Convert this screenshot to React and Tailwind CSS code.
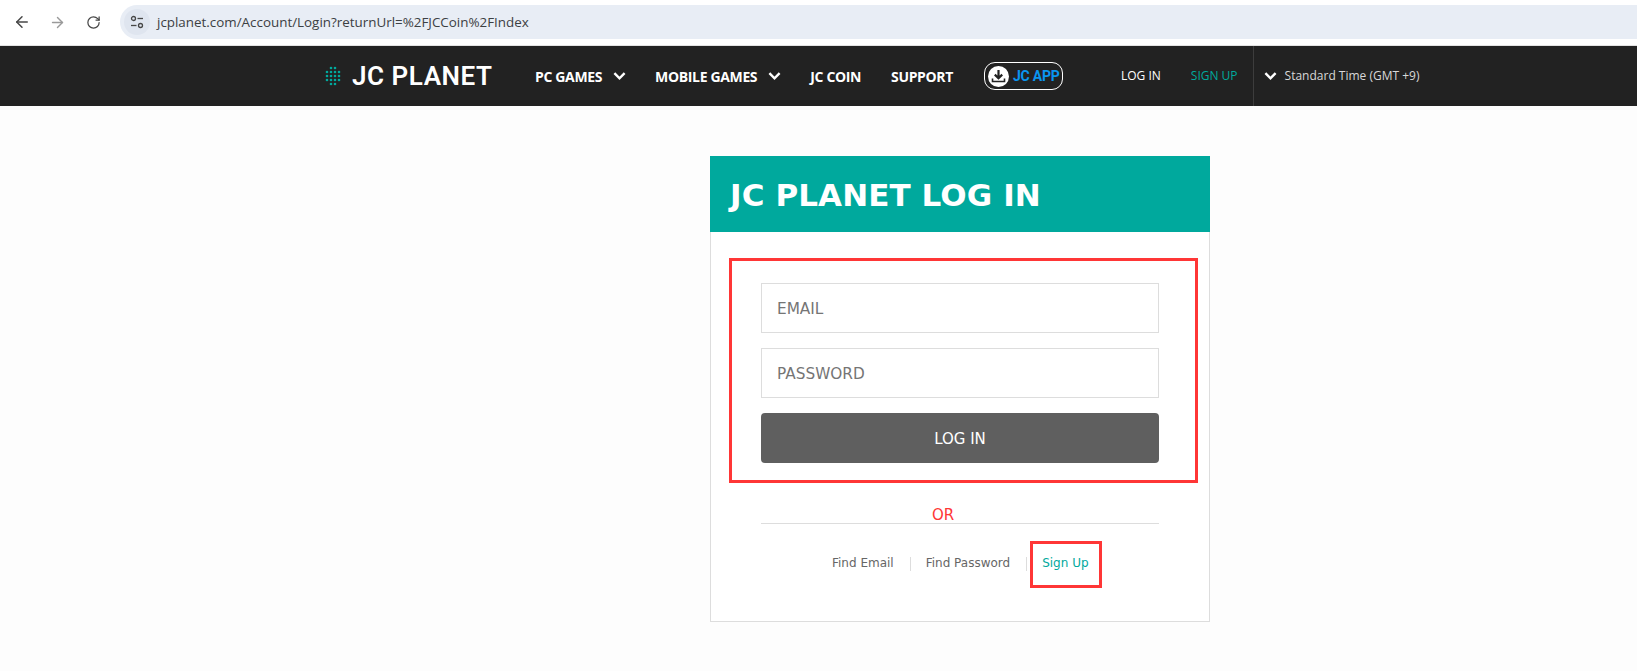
import React from 'react';
import { ArrowLeft, ArrowRight, RotateCw } from 'lucide-react';

const Chevron = ({ className }) => (
  <svg viewBox="0 0 14 10" className={className} fill="none" stroke="currentColor" strokeWidth="2.6">
    <path d="M1.5 2 L7 7.5 L12.5 2" />
  </svg>
);

const LogoDots = () => {
  const rows = [
    [7, 11],
    [3, 7, 11, 15],
    [3, 7, 11, 15],
    [3, 7, 11, 15],
    [7, 11],
  ];
  return (
    <svg width="18" height="20" viewBox="0 0 18 20" className="shrink-0">
      {rows.map((row, y) =>
        row.map((x) => <circle key={`${x}-${y}`} cx={x} cy={y * 4 + 2} r="1.3" fill="#00a99d" />)
      )}
    </svg>
  );
};

const BrowserBar = () => (
  <div className="h-[46px] pb-[1px] bg-white flex items-center border-b border-[#e3e3e3]">
    <ArrowLeft className="w-[18px] h-[18px] ml-[13px] text-[#474747]" strokeWidth={2} />
    <ArrowRight className="w-[17px] h-[17px] ml-[18px] text-[#9a9a9a]" strokeWidth={2} />
    <RotateCw className="w-[15px] h-[15px] ml-[20px] text-[#474747]" strokeWidth={2} />
    <div className="ml-[19px] flex-1 h-[34px] rounded-l-full bg-[#e8edf5] flex items-center">
      <div className="ml-[4px] w-[26px] h-[26px] rounded-full bg-[#dfe5ef] flex items-center justify-center">
        <svg width="14" height="14" viewBox="0 0 14 14" fill="none" stroke="#474747" strokeWidth="1.3">
          <circle cx="3.5" cy="3.5" r="2" />
          <path d="M7.5 3.5 H13" />
          <path d="M1 10.5 H6.5" />
          <circle cx="10.5" cy="10.5" r="2" />
        </svg>
      </div>
      <span className="ml-[7px] text-[13.4px] text-[#3c4043] font-['Open_Sans',sans-serif]">
        jcplanet.com/Account/Login?returnUrl=%2FJCCoin%2FIndex
      </span>
    </div>
  </div>
);

const NavBar = () => (
  <div className="h-[60px] bg-[#222222] flex items-center text-white font-['Open_Sans',sans-serif]">
    <div className="ml-[324px]">
      <LogoDots />
    </div>
    <span className="ml-[10px] w-[141px] text-[26px] font-semibold tracking-[0.55px] whitespace-nowrap font-['Roboto',sans-serif]">
      JC PLANET
    </span>
    <span className="ml-[42px] text-[14px] font-bold tracking-[-0.35px]">PC GAMES</span>
    <Chevron className="ml-[11px] w-[13px] h-[10px]" />
    <span className="ml-[29px] text-[14px] font-bold tracking-[-0.35px]">MOBILE GAMES</span>
    <Chevron className="ml-[11px] w-[13px] h-[10px]" />
    <span className="ml-[29px] text-[14px] font-bold tracking-[-0.35px]">JC COIN</span>
    <span className="ml-[30px] text-[14px] font-bold tracking-[-0.35px]">SUPPORT</span>
    <div className="ml-[31px] w-[79px] h-[28px] rounded-[11px] border border-white flex items-center">
      <svg width="21" height="21" viewBox="0 0 21 21" className="ml-[3px] shrink-0">
        <circle cx="10.5" cy="10.5" r="10.5" fill="#ffffff" />
        <path d="M10.5 4 V12 M6.8 8.6 L10.5 12.3 L14.2 8.6" fill="none" stroke="#222222" strokeWidth="2.2" />
        <path d="M4.5 12.5 V15.5 H16.5 V12.5" fill="none" stroke="#222222" strokeWidth="1.6" />
      </svg>
      <span className="ml-[4px] text-[14px] font-bold text-[#0a95f0] tracking-[-0.2px] whitespace-nowrap font-['Roboto',sans-serif]">
        JC APP
      </span>
    </div>
    <span className="ml-[58px] text-[12px]">LOG IN</span>
    <span className="ml-[30px] text-[12px] text-[#00a99d]">SIGN UP</span>
    <div className="ml-[15px] h-full border-l border-[#3d3d3d] flex items-center">
      <Chevron className="ml-[10px] w-[13px] h-[10px]" />
      <span className="ml-[8px] text-[12px] text-[#d8d8d8]">Standard Time (GMT +9)</span>
    </div>
  </div>
);

const LoginCard = () => (
  <div className="ml-[710px] mt-[50px] w-[500px] font-['DejaVu_Sans',sans-serif]">
    <div className="h-[76px] bg-[#00a99d] flex items-center pl-[20px] pt-[2px]">
      <h1 className="text-[31px] font-bold text-white tracking-[0.1px] whitespace-nowrap">JC PLANET LOG IN</h1>
    </div>
    <div className="h-[390px] bg-white border border-t-0 border-[#dddddd] pt-[26px] pl-[18px] pr-[11px]">
      <div className="h-[225px] border-[3px] border-[#ff3636] pt-[22px] pl-[29px] pr-[36px]">
        <div className="h-[50px] border border-[#dddddd] flex items-center pl-[15px] pt-[3px] text-[15.3px] text-[#757575]">
          EMAIL
        </div>
        <div className="mt-[15px] h-[50px] border border-[#dddddd] flex items-center pl-[15px] pt-[3px] text-[15.3px] text-[#757575]">
          PASSWORD
        </div>
        <button className="mt-[15px] w-full h-[50px] rounded bg-[#5f5f5f] text-white text-[15px] pt-[3px]">LOG IN</button>
      </div>
      <div className="ml-[32px] w-[398px] mt-[23px] h-[18px] border-b border-[#dddddd] flex justify-center pr-[34px]">
        <span className="text-[15px] leading-[18px] text-[#ff3636]">OR</span>
      </div>
      <div className="mt-[17px] ml-[103px] flex items-center text-[12px] text-[#666666] whitespace-nowrap">
        <span className="-mt-[4px]">Find Email</span>
        <span className="ml-[16px] -mt-[2px] h-[14px] border-l border-[#dddddd]" />
        <span className="ml-[15px] -mt-[4px]">Find Password</span>
        <span className="ml-[16px] -mt-[2px] h-[14px] border-l border-[#dddddd]" />
        <div className="ml-[3px] w-[72px] h-[47px] border-[3px] border-[#ff3636] flex items-center pl-[9px] pb-[4px] text-[#00a99d]">
          Sign Up
        </div>
      </div>
    </div>
  </div>
);

const App = () => (
  <div className="w-[1637px] h-[671px] overflow-hidden bg-[#fdfdfd]">
    <BrowserBar />
    <NavBar />
    <LoginCard />
  </div>
);

export default App;
